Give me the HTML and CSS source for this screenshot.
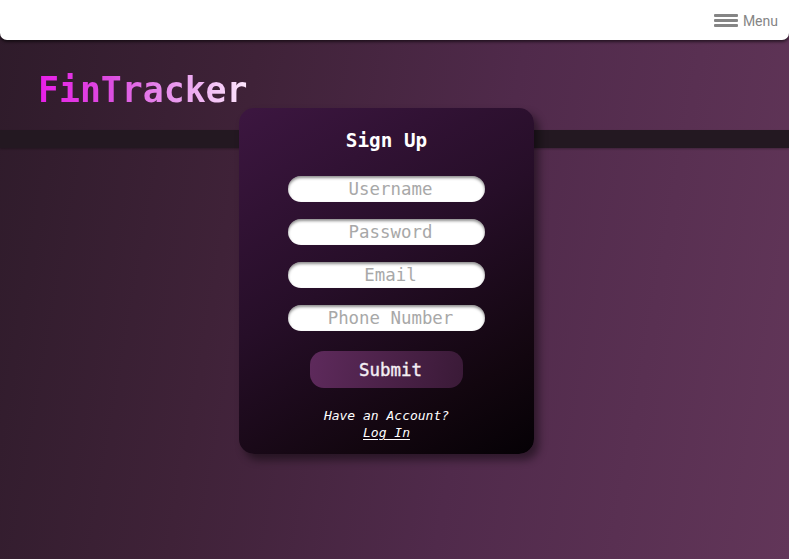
FILE: index.html
```html
<!DOCTYPE html>
<html lang="en">
<head>
<meta charset="utf-8">
<title>FinTracker - Sign Up</title>
<link rel="stylesheet" href="styles.css">
</head>
<body>
<header class="topbar">
  <button class="menu-btn" type="button">
    <svg class="menu-icon" width="24" height="13" viewBox="0 0 24 13" aria-hidden="true">
      <rect x="0" y="0" width="24" height="3" rx="1" fill="#858585"/>
      <rect x="0" y="5" width="24" height="3" rx="1" fill="#858585"/>
      <rect x="0" y="10" width="24" height="3" rx="1" fill="#858585"/>
    </svg>
    <span class="menu-label">Menu</span>
  </button>
</header>
<main class="stage">
  <h1 class="logo">FinTracker</h1>
  <section class="card">
    <h2 class="card-title">Sign Up</h2>
    <form class="form">
      <input class="field" type="text" placeholder="Username">
      <input class="field" type="password" placeholder="Password">
      <input class="field" type="email" placeholder="Email">
      <input class="field" type="tel" placeholder="Phone Number">
      <button class="submit" type="button">Submit</button>
    </form>
    <p class="switch">Have an Account?<br><a href="#" class="switch-link">Log In</a></p>
  </section>
</main>
</body>
</html>
```
FILE: styles.css
```css
* { box-sizing: border-box; }
html, body { height: 100%; }
body {
  margin: 0;
  background: linear-gradient(100deg, #2e1b2a 0%, #3f2238 30%, #502a4b 60%, #623659 100%);
  font-family: "DejaVu Sans Mono", "Liberation Mono", monospace;
  overflow: hidden;
}
.topbar {
  height: 40px;
  background: #fff;
  border-radius: 0 0 7px 7px;
  box-shadow: 0 2px 3px rgba(0,0,0,0.55);
  display: flex;
  justify-content: flex-end;
  align-items: center;
  padding-right: 11px;
  position: relative;
  z-index: 2;
}
.menu-btn {
  display: flex;
  align-items: center;
  gap: 5px;
  background: none;
  border: 0;
  padding: 0;
  margin-top: 1px;
  cursor: pointer;
}
.menu-label {
  font-family: Roboto, "Liberation Sans", sans-serif;
  font-size: 14px;
  color: #858585;
}
.stage {
  position: relative;
  padding-top: 33px;
}
.stage::before {
  content: "";
  position: absolute;
  left: 0;
  right: 0;
  top: 90px;
  height: 18px;
  background: #231821;
  box-shadow: 0 1px 2px rgba(0,0,0,0.3);
}
.logo {
  position: relative;
  margin: 0 0 0 38px;
  font-size: 34.8px;
  line-height: 35px;
  height: 35px;
  font-weight: bold;
  display: inline-block;
  background: linear-gradient(90deg, #e81ee8 0%, #dc4ee0 35%, #eba4f0 70%, #fde8fd 100%);
  -webkit-background-clip: text;
  background-clip: text;
  color: transparent;
}
.card {
  position: relative;
  margin: 0 0 0 239px;
  width: 295px;
  height: 346px;
  border-radius: 15px;
  background: linear-gradient(150deg, #3c1640 0%, #260e28 45%, #12060f 80%, #050105 100%);
  box-shadow: 5px 6px 9px rgba(0,0,0,0.45);
  padding-top: 21px;
  display: flex;
  flex-direction: column;
  align-items: center;
}
.card-title {
  margin: 0;
  color: #fff;
  font-size: 19.3px;
  line-height: 24px;
  font-weight: bold;
}
.form {
  margin-top: 23px;
  display: flex;
  flex-direction: column;
  align-items: center;
  gap: 17px;
}
.field {
  width: 197px;
  height: 26px;
  border: 0;
  border-radius: 13px;
  background: #fff;
  box-shadow: inset 0 2px 3px rgba(0,0,0,0.45);
  font-family: inherit;
  font-size: 17.4px;
  text-align: center;
  padding: 0 4px 0 12px;
  outline: none;
  color: #333;
}
.field::placeholder { color: #a8a8a8; }
.submit {
  margin-top: 3px;
  width: 153px;
  height: 37px;
  border: 0;
  border-radius: 14px;
  background: linear-gradient(100deg, #5e2a5c 0%, #4c2249 50%, #3a1a37 100%);
  color: #f4eef4;
  font-family: inherit;
  font-size: 17.4px;
  font-weight: normal;
  -webkit-text-stroke: 0.4px #f4eef4;
  padding: 0 0 0 8px;
}
.switch {
  margin: 19px 0 0;
  text-align: center;
  color: #fff;
  font-style: italic;
  font-size: 13px;
  line-height: 17px;
}
.switch-link {
  color: #fff;
  text-decoration: underline;
  text-underline-offset: 2px;
}
```
